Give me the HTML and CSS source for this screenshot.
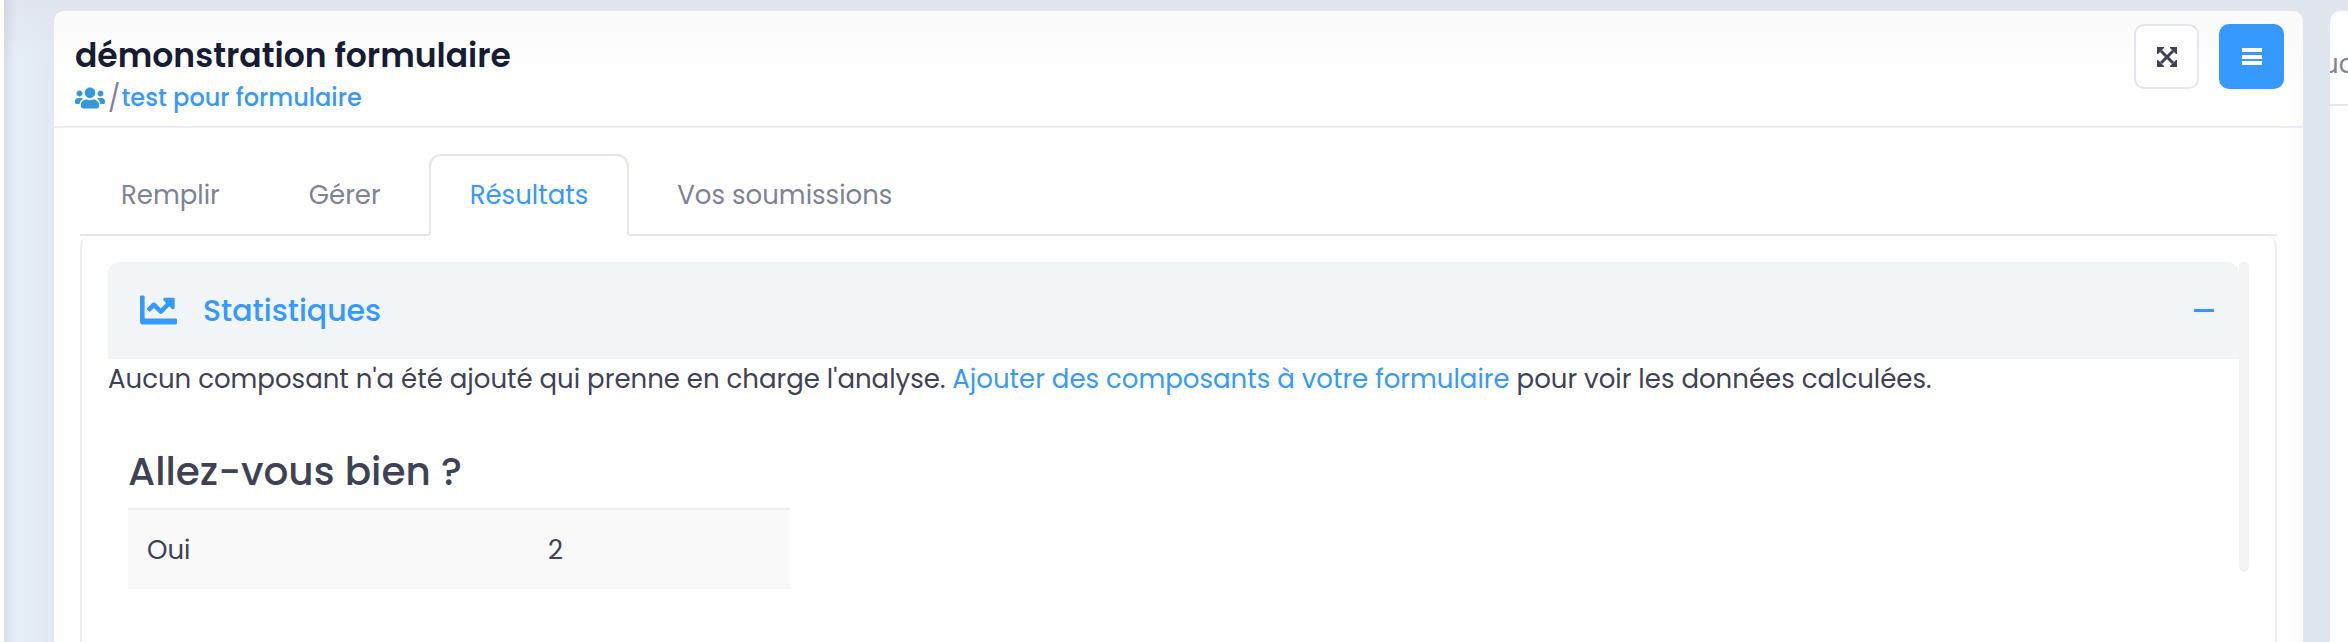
FILE: index.html
```html
<!DOCTYPE html>
<html lang="fr">
<head>
<meta charset="utf-8">
<title>démonstration formulaire</title>
<link rel="stylesheet" href="styles.css">
</head>
<body>
<div class="app">
  <main class="card">
    <header class="card-header">
      <div class="heading">
        <h1 class="title">démonstration formulaire</h1>
        <nav class="breadcrumb" aria-label="Fil d'Ariane">
          <a class="crumb-home" href="#" aria-label="Espaces">
            <svg class="icon-users" viewBox="0 0 640 512" aria-hidden="true"><path fill="currentColor" d="M96 224c35.300 0 64-28.700 64-64s-28.700-64-64-64-64 28.700-64 64 28.700 64 64 64zm448 0c35.300 0 64-28.700 64-64s-28.700-64-64-64-64 28.700-64 64 28.700 64 64 64zm32 32h-64c-17.600 0-33.500 7.100-45.100 18.600 40.300 22.100 68.900 62 75.100 109.400h66c17.700 0 32-14.300 32-32v-32c0-35.300-28.700-64-64-64zm-256 0c61.900 0 112-50.100 112-112S381.900 32 320 32 208 82.100 208 144s50.100 112 112 112zm76.800 32h-8.300c-20.800 10-43.900 16-68.500 16s-47.600-6-68.500-16h-8.300C179.600 288 128 339.600 128 403.200V432c0 26.500 21.500 48 48 48h288c26.500 0 48-21.500 48-48v-28.800c0-63.600-51.600-115.200-115.200-115.200zm-223.700-13.400C161.500 263.100 145.600 256 128 256H64c-35.300 0-64 28.700-64 64v32c0 17.700 14.300 32 32 32h65.900c6.300-47.400 34.900-87.300 75.200-109.400z"/></svg>
          </a>
          <span class="crumb-separator">/</span>
          <a class="crumb-link" href="#">test pour formulaire</a>
        </nav>
      </div>
      <div class="actions">
        <button class="action action-outline" type="button" aria-label="Plein écran">
          <svg class="icon-action" viewBox="0 0 20 20" aria-hidden="true"><path d="M4 4 16 16M16 4 4 16" stroke="currentColor" stroke-width="3"/><path fill="currentColor" d="M0 0h7v1L1 7H0zM20 0v7h-1l-6-6V0zM0 20v-7h1l6 6v1zM20 20h-7v-1l6-6h1z"/></svg>
        </button>
        <button class="action action-primary" type="button" aria-label="Menu">
          <svg class="icon-action" viewBox="0 0 20 20" aria-hidden="true"><path fill="currentColor" d="M0 1h20v4H0zM0 8h20v4H0zM0 14h20v4H0z"/></svg>
        </button>
      </div>
    </header>
    <section class="card-body">
      <nav class="tabs" aria-label="Formulaire">
        <a class="tab" href="#">Remplir</a>
        <a class="tab" href="#">Gérer</a>
        <a class="tab tab-active" href="#" aria-current="page">Résultats</a>
        <a class="tab" href="#">Vos soumissions</a>
      </nav>
      <div class="panel">
        <div class="scroller">
          <div class="results">
            <button class="stats-header" type="button" aria-expanded="true">
              <svg class="icon-chart" viewBox="0 0 512 512" aria-hidden="true"><path fill="currentColor" d="M496 368H64V64c0-8.840-7.160-16-16-16H16C7.160 48 0 55.160 0 64v352c0 17.670 14.330 32 32 32h464c8.840 0 16-7.160 16-16v-48c0-8.840-7.160-16-16-16zM464 80H345.940c-21.380 0-32.090 25.850-16.970 40.970l32.400 32.400L288 226.750l-73.370-73.370c-12.500-12.500-32.760-12.500-45.250 0l-68.690 68.690c-6.250 6.250-6.250 16.380 0 22.630l22.620 22.620c6.250 6.250 16.380 6.250 22.630 0L192 221.250l73.370 73.370c12.500 12.500 32.760 12.500 45.250 0l96-96 32.400 32.400c15.120 15.120 40.970 4.410 40.970-16.970V96c.010-8.840-7.150-16-15.990-16z"/></svg>
              <span class="stats-title">Statistiques</span>
              <svg class="icon-minus" viewBox="0 0 20 3" aria-hidden="true"><path fill="currentColor" d="M0 0h20v3H0z"/></svg>
            </button>
            <p class="notice">Aucun composant n'a été ajouté qui prenne en charge l'analyse. <a href="#">Ajouter des composants à votre formulaire</a> pour voir les données calculées.</p>
            <div class="question">
              <h2 class="question-title">Allez-vous bien ?</h2>
              <table class="answers">
                <tbody><tr><td>Oui</td><td>2</td></tr></tbody>
              </table>
            </div>
          </div>
          <div class="scrollbar"></div>
        </div>
      </div>
    </section>
  </main>
  <aside class="side-card">
    <div class="side-header"><span class="side-label">uc</span></div>
  </aside>
</div>
</body>
</html>
```
FILE: styles.css
```css
* { box-sizing: border-box; }

body {
  margin: 0;
  background: #fff;
  color: #3f4254;
  font-family: Poppins, Inter, sans-serif;
  font-size: 26px;
  line-height: 40px;
}

a { color: #3699ff; text-decoration: none; }
h1, h2, p { margin: 0; }
button { font: inherit; cursor: pointer; }
svg { display: block; flex: none; }

.app {
  display: flex;
  gap: 27px;
  min-height: 100vh;
  margin-left: 4px;
  padding: 11px 0 0 50px;
  overflow: hidden;
  background:
    linear-gradient(90deg, rgba(90, 95, 130, .12), rgba(90, 95, 130, 0) 12px),
    linear-gradient(180deg, #e1e5ee, rgba(225, 229, 238, 0) 60px),
    linear-gradient(90deg, #e8f0f8, #e2e9f1 50px, #dfe5ee);
}

.card {
  display: flex;
  flex: 1;
  flex-direction: column;
  min-width: 0;
  border-radius: 10px 10px 0 0;
  background:
    linear-gradient(180deg, #fafafb, rgba(255, 255, 255, 0) 70px),
    linear-gradient(270deg, #fbfbfc, #fff 28px);
}

.card-header {
  display: flex;
  justify-content: space-between;
  padding: 13px 19px 10px 21px;
  border-bottom: 2px solid #ebedf3;
}

.heading { padding-top: 12px; }

.title {
  color: #181c32;
  font-size: 33px;
  font-weight: 600;
  line-height: 40px;
}

.breadcrumb {
  display: flex;
  align-items: center;
  margin-top: 4px;
  font-size: 24px;
  font-weight: 500;
  line-height: 36px;
}

.crumb-home { color: #3498db; }
.icon-users { width: 30px; height: 24px; }
.crumb-separator { padding: 0 1px 0 3px; color: #7e8299; font-size: 26px; font-weight: 400; }

.actions { display: flex; gap: 20px; }

.action {
  display: flex;
  align-items: center;
  justify-content: center;
  width: 65px;
  height: 65px;
  padding: 0;
  border: 2px solid #e4e6ef;
  border-radius: 10px;
  background: #fff;
  color: #3f4254;
}
.action-primary { border-color: #3699ff; background: #3699ff; color: #fff; }
.icon-action { width: 20px; height: 20px; }

.card-body {
  display: flex;
  flex: 1;
  flex-direction: column;
  padding: 26px 26px 0;
}

.tabs { display: flex; border-bottom: 2px solid #e4e6ef; }

.tab {
  margin-bottom: -2px;
  padding: 19px 39px;
  border: 2px solid transparent;
  border-radius: 12px 12px 0 0;
  color: #7e8299;
}
.tab + .tab { margin-left: 7px; }
.tab-active { border-color: #e4e6ef #e4e6ef #fff; background: #fff; color: #3699ff; }

.panel {
  flex: 1;
  padding: 26px 26px 0;
  border: 2px solid #ebedf3;
  border-width: 0 2px;
  border-radius: 10px 10px 0 0;
}

.scroller { display: flex; height: 310px; }
.results { flex: 1; min-width: 0; }
.scrollbar { width: 10px; border-radius: 5px; background: #f3f3f3; }

.stats-header {
  display: flex;
  align-items: center;
  width: 100%;
  height: 97px;
  padding: 0 25px 0 32px;
  border: 0;
  border-radius: 12px 12px 0 0;
  background: #f1f5f8;
  color: #3699ff;
  text-align: left;
}
.icon-chart { width: 37px; height: 37px; }
.stats-title { flex: 1; padding-left: 26px; font-size: 30px; font-weight: 500; }
.icon-minus { width: 20px; height: 3px; }

.question { padding: 50px 20px 0; }
.question-title { font-size: 39px; font-weight: 500; line-height: 46px; }

.answers {
  width: 662px;
  margin-top: 13px;
  border-spacing: 0;
  background: #f9f9f9;
  table-layout: fixed;
}
.answers td { height: 81px; padding: 0 19px; border-top: 2px solid #ebedf3; }
.answers td:first-child { width: 401px; }

.side-card {
  width: 18px;
  overflow: hidden;
  border-radius: 10px 0 0 0;
  background: #fff;
}
.side-header { padding: 33px 0 20px; border-bottom: 2px solid #e4e6ef; color: #7e8299; }
.side-label { display: block; margin-left: -8px; }
```
